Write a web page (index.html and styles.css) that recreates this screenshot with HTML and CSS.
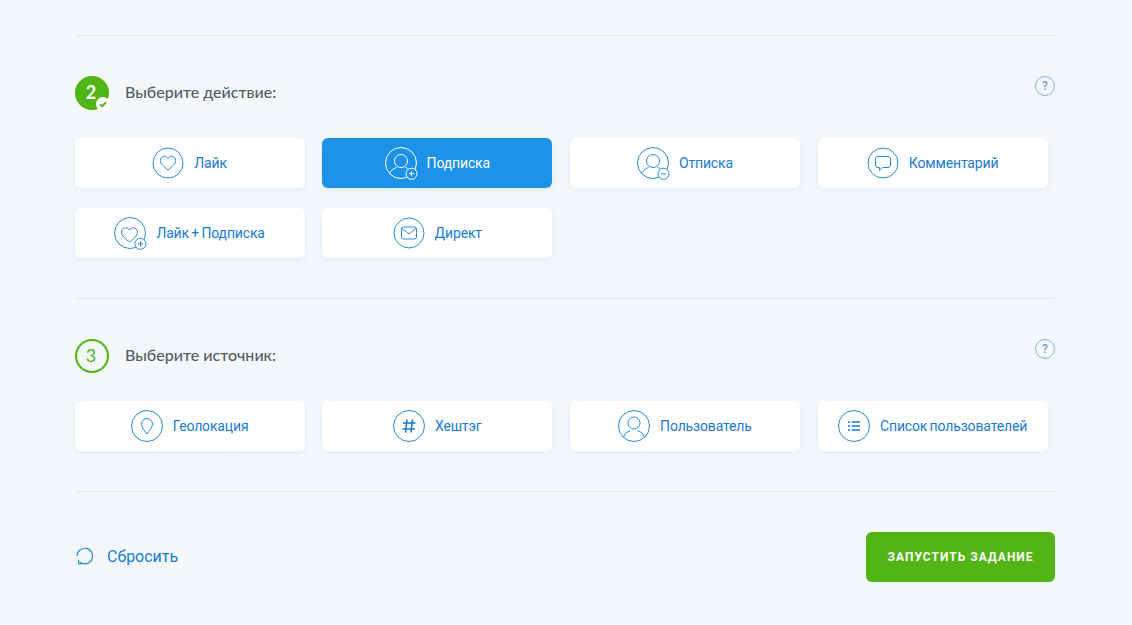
FILE: index.html
```html
<!DOCTYPE html>
<html lang="ru">
<head>
  <meta charset="UTF-8" />
  <title>Новое задание</title>
  <link rel="stylesheet" href="styles.css">
</head>
<body>
  <div class="page">
    <section class="step">
      <div class="step-head">
        <span class="num num-done">2<span class="tick"><svg viewBox="0 0 10 10" width="10" height="10"><path d="M2 5.200l2.200 2.200L8 3.200" fill="none" stroke="#52b415" stroke-width="2" /></svg></span></span>
        <h3>Выберите действие:</h3>
        <span class="help">?</span>
      </div>
      <div class="cards">
        <a class="card">
          <svg class="ico" viewBox="0 0 32 32"><circle cx="16" cy="16" r="15" /><path d="M16 23c-4-3.200-7.600-6-7.600-9.600 0-2.400 1.800-4.200 4-4.200 1.500 0 2.800.8 3.600 2.100.8-1.300 2.100-2.100 3.600-2.100 2.200 0 4 1.800 4 4.200C23.600 17 20 19.800 16 23z" /></svg>
          Лайк
        </a>
        <a class="card active">
          <svg class="ico ico-big" viewBox="0 0 33 33"><circle cx="16" cy="16" r="15.500" /><circle cx="16" cy="14" r="6.500" /><path d="M4.500 26.500c1.200-3 3.800-5 7.200-6M20.500 20.500c1.200.3 2.200.8 3 1.400" /><circle class="sub" cx="26.500" cy="26.800" r="5.500" /><path d="M24 26.800h5M26.500 24.300v5" /></svg>
          Подписка
        </a>
        <a class="card">
          <svg class="ico ico-big" viewBox="0 0 33 33"><circle cx="16" cy="16" r="15.500" /><circle cx="16" cy="14" r="6.500" /><path d="M4.500 26.500c1.200-3 3.800-5 7.200-6M20.500 20.500c1.200.3 2.200.8 3 1.400" /><circle class="sub" cx="26.500" cy="26.800" r="5.500" /><path d="M24 26.800h5" /></svg>
          Отписка
        </a>
        <a class="card">
          <svg class="ico" viewBox="0 0 32 32"><circle cx="16" cy="16" r="15" /><path d="M11 9.500h10c1.500 0 2.500 1 2.500 2.500v6c0 1.500-1 2.500-2.500 2.500h-5.500L12.500 23.500v-3H11c-1.500 0-2.500-1-2.500-2.500v-6c0-1.500 1-2.500 2.500-2.500z" /></svg>
          Комментарий
        </a>
        <a class="card">
          <svg class="ico ico-big" viewBox="0 0 33 33"><circle cx="16" cy="16" r="15.500" /><path d="M15.500 25c-4-3.200-8-6.100-8-9.900 0-2.500 1.900-4.300 4.200-4.300 1.600 0 3 .8 3.800 2.200.8-1.400 2.200-2.200 3.800-2.200 2.300 0 4.200 1.800 4.200 4.300 0 3.800-4 6.700-8 9.900z" /><circle class="sub" cx="26.500" cy="26.800" r="5.500" /><path d="M24 26.800h5M26.500 24.300v5" /></svg>
          Лайк + Подписка
        </a>
        <a class="card">
          <svg class="ico" viewBox="0 0 32 32"><circle cx="16" cy="16" r="15" /><rect x="8.500" y="10" width="15" height="12" rx="2" /><path d="M9 11.500l7 5.500 7-5.500" /></svg>
          Директ
        </a>
      </div>
    </section>

    <section class="step">
      <div class="step-head">
        <span class="num">3</span>
        <h3>Выберите источник:</h3>
        <span class="help">?</span>
      </div>
      <div class="cards">
        <a class="card">
          <svg class="ico" viewBox="0 0 32 32"><circle cx="16" cy="16" r="15.500" /><path d="M16 24c-1.800-2.500-5.500-6.500-5.500-10a5.500 5.500 0 0 1 11 0c0 3.500-3.700 7.500-5.500 10z" /></svg>
          Геолокация
        </a>
        <a class="card">
          <svg class="ico" viewBox="0 0 32 32"><circle cx="16" cy="16" r="15.500" /><path class="thick" d="M14 9.500l-1.500 13M19.500 9.500l-1.500 13M10 13h12.500M9.500 19h12.500" /></svg>
          Хештэг
        </a>
        <a class="card">
          <svg class="ico" viewBox="0 0 32 32"><circle cx="16" cy="16" r="15.500" /><circle cx="16" cy="13" r="6" /><path d="M5.500 27.500c1-3.700 3.500-6 6.800-6.700M19.700 20.800c3.300.7 5.800 3 6.800 6.700" /></svg>
          Пользователь
        </a>
        <a class="card">
          <svg class="ico" viewBox="0 0 32 32"><circle cx="16" cy="16" r="15.500" /><path class="thick" d="M10 12h2M10 16h2M10 20h2M13.500 12h8.500M13.500 16h8.500M13.500 20h8.500" /></svg>
          Список пользователей
        </a>
      </div>
    </section>

    <div class="actions">
      <a class="reset">
        <svg viewBox="0 0 20 20" width="20" height="20"><path d="M2 10A7.800 7.800 0 1 1 5 16.200M3.400 13.800L3.800 17.800 7.800 17.500" /></svg>
        Сбросить
      </a>
      <button class="run">Запустить задание</button>
    </div>
  </div>
</body>
</html>
```

FILE: styles.css
```css
* { box-sizing: border-box; margin: 0; padding: 0; }

body {
  font-family: 'Roboto', sans-serif;
  background: #f3f8fb;
  height: 625px;
  overflow: hidden;
}

.page {
  width: 980px;
  margin-left: 75px;
  padding-top: 35px;
}

.step {
  border-top: 1px solid #e2e9ec;
  padding-top: 40px;
  padding-bottom: 40px;
}

.step-head {
  display: flex;
  align-items: center;
  height: 34px;
  margin-bottom: 28px;
  position: relative;
}

.step-head h3 {
  font-family: 'Lato', sans-serif;
  font-size: 16px;
  font-weight: 500;
  color: #545c68;
  margin-left: 16px;
  padding-bottom: 4px;
}

.num {
  width: 34px;
  height: 34px;
  border-radius: 50%;
  border: 2px solid #52b415;
  color: #52b415;
  font-family: 'Lato', sans-serif;
  font-size: 18px;
  display: flex;
  align-items: center;
  justify-content: center;
  padding: 0 2px 2px 0;
  position: relative;
}

.num-done {
  background: #52b415;
  color: #fff;
  font-weight: 700;
}

.tick {
  position: absolute;
  right: -3px;
  bottom: -3px;
  width: 14px;
  height: 14px;
  border-radius: 50%;
  background: #fff;
  display: flex;
  align-items: center;
  justify-content: center;
}

.help {
  position: absolute;
  right: 0;
  top: 0;
  width: 20px;
  height: 20px;
  border: 1px solid #7db5e2;
  border-radius: 50%;
  color: #6f9fca;
  font-size: 12px;
  font-weight: 500;
  line-height: 18px;
  text-align: center;
}

.cards {
  display: grid;
  grid-template-columns: repeat(4, 230px);
  column-gap: 17.67px;
  row-gap: 20px;
  margin-left: -0.4px;
}

.card {
  height: 50px;
  background: #fff;
  border-radius: 6px;
  box-shadow: 0 2px 6px rgba(27, 120, 200, 0.08);
  color: #1a7bd0;
  font-size: 14px;
  letter-spacing: -0.15px;
  word-spacing: -1px;
  display: flex;
  align-items: center;
  justify-content: center;
  gap: 10px;
}

.card.active {
  background: #1b91e8;
  color: #fff;
}

.ico {
  width: 32px;
  height: 32px;
  fill: none;
  stroke: #2a8bdb;
  stroke-width: 1;
}

.ico-big {
  width: 33px;
  height: 33px;
  margin-right: -1px;
}

.ico .thick { stroke-width: 1.6; stroke: #1a7bd0; }
.ico .sub { fill: #fff; }

.active .ico { stroke: #fff; }
.active .ico .sub { fill: #1b91e8; }

.actions {
  border-top: 1px solid #e2e9ec;
  padding-top: 40px;
  display: flex;
  align-items: center;
  justify-content: space-between;
}

.reset {
  display: flex;
  align-items: center;
  gap: 12px;
  color: #1a7bd0;
  font-size: 16px;
  padding-bottom: 2px;
}

.reset svg {
  fill: none;
  stroke: #2a8bdb;
  stroke-width: 1.2;
}

.run {
  width: 189px;
  height: 50px;
  border: none;
  border-radius: 6px;
  background: #52b415;
  color: #fff;
  font-family: 'Roboto', sans-serif;
  font-size: 12px;
  font-weight: 700;
  letter-spacing: 1px;
  text-transform: uppercase;
}
```
